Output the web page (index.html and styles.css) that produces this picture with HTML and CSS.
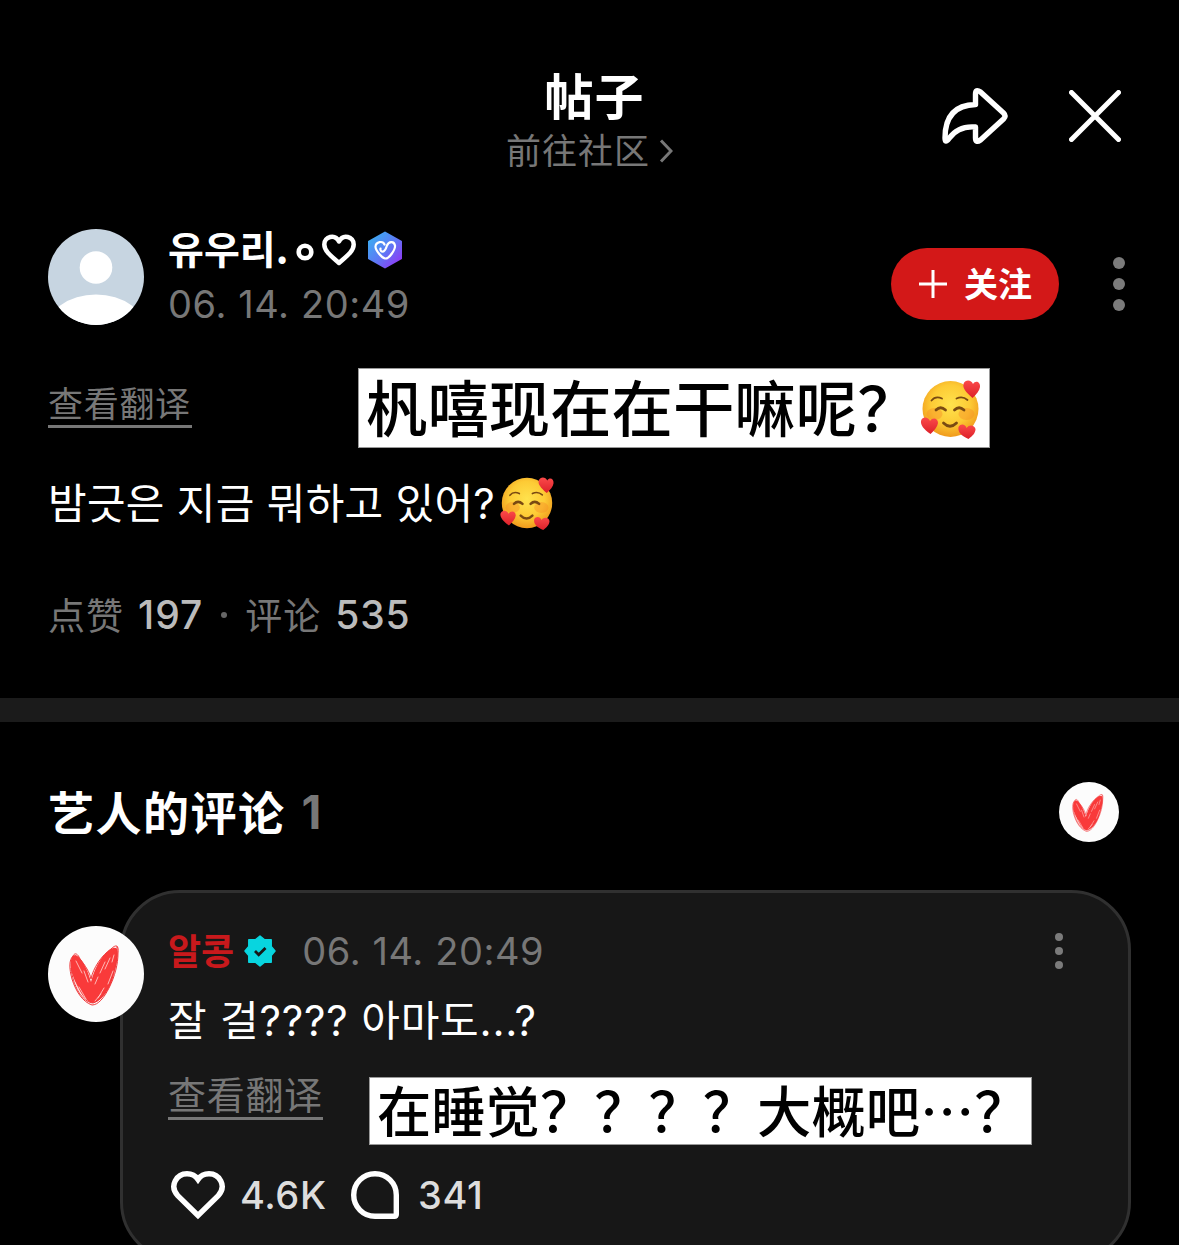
FILE: index.html
```html
<!DOCTYPE html>
<html lang="zh-CN">
<head>
<meta charset="utf-8">
<title>帖子</title>
<link rel="stylesheet" href="styles.css">
</head>
<body>
<svg width="0" height="0" class="defs" aria-hidden="true">
  <defs>
    <radialGradient id="face" cx="50%" cy="42%" r="58%">
      <stop offset="0" stop-color="#ffe24d"/><stop offset=".6" stop-color="#fdcb35"/><stop offset="1" stop-color="#f09a1c"/>
    </radialGradient>
    <linearGradient id="love" x1="0" y1="0" x2="0" y2="1">
      <stop offset="0" stop-color="#fb4a4a"/><stop offset="1" stop-color="#dc2029"/>
    </linearGradient>
    <linearGradient id="hex" x1="0" y1="0" x2="1" y2="1">
      <stop offset="0" stop-color="#35b5f0"/><stop offset=".5" stop-color="#5b7cf5"/><stop offset="1" stop-color="#9a2cf5"/>
    </linearGradient>
    <symbol id="emoji" viewBox="0 0 60 60">
      <circle cx="30" cy="30" r="28" fill="url(#face)"/>
      <ellipse cx="14" cy="35" rx="8" ry="6" fill="#f58a25" opacity=".4"/>
      <ellipse cx="46" cy="35" rx="8" ry="6" fill="#f58a25" opacity=".4"/>
      <g fill="none" stroke="#7a4a12" stroke-linecap="round">
        <path d="M11 21.500Q15 16.500 21.500 19.500M36 19.500Q42 16.500 47 21" stroke-width="1.800"/>
        <path d="M15.500 31Q20 26.500 25 31M34 31Q38.500 26.500 43.500 31" stroke-width="2.800"/>
        <path d="M23 44Q29.500 50.500 36 44" stroke-width="2.800"/>
      </g>
      <g fill="url(#love)">
        <path d="M52 19C45 13 42 9 43 5C45 0 51 1 52.500 5C55 1 60 3 59.500 8C59 12 56 15 52 19Z"/>
        <path d="M10 55C3 50 0 46 .5 42C2 37 8 38 9.500 42C12 38 17.500 39 17.500 44C17 48 14 51 10 55Z"/>
        <path d="M48 60C41 57 37 53 38 48C40 44 45 45 46 49C49 45 54 46 55 50C55 54 52 57 48 60Z"/>
      </g>
    </symbol>
    <symbol id="scribble" viewBox="0 0 96 96">
      <circle cx="48" cy="48" r="48" fill="#fcfcfc"/>
      <path d="M27 29C22 30 21 40 25 50C29 61 35 74 44 77C54 76 63 62 66 48C69 38 71 28 69 23C66 19 58 26 53 33C48 40 45 48 43 56C40 44 33 30 27 29Z" fill="#f93a3a"/>
      <g fill="none" stroke="#f0393b" stroke-width="1">
        <path d="M25 30C27 26 30 28 32 33C37 39 42 47 43 53C45 42 54 29 63 23C68 18 71 19 70 27C70 38 67 50 61 62C56 72 50 79 44 79C35 76 28 66 24 53C21 42 21 34 25 30Z"/>
        <path d="M23 42C25 60 34 76 45 77C58 74 70 44 69 20"/>
      </g>
      <g fill="none" stroke="#ffd6d3" stroke-width=".8" stroke-linecap="round">
        <path d="M27 56L33 68M31 61L38 73M28 35L34 47M57 36L52 47M62 32L57 43M65 45L60 58M56 62L50 72M36 45L40 56M50 51L47 58M53 68L47 75M66 29L64 36"/>
      </g>
    </symbol>
  </defs>
</svg>

<header class="topbar">
  <div class="topbar-center">
    <h1 class="topbar-title">帖子</h1>
    <a class="community"><span>前往社区</span><svg class="chevron" width="14" height="24" viewBox="0 0 14 24"><path d="M2 1.500L12 12L2 22.500" fill="none" stroke="#777" stroke-width="3"/></svg></a>
  </div>
  <div class="topbar-actions">
    <svg width="66" height="58" viewBox="0 0 66 58"><path d="M33.500 17.500V7Q33.500 1.500 38.500 5L61.500 26Q64.500 29 61.500 32L38.500 53Q33.500 56.500 33.500 51V40C22 39 13 43 7 51.500Q3 57 3 51C3 29 13 18 33.500 17.500Z" fill="none" stroke="#fff" stroke-width="5.400" stroke-linejoin="round"/></svg>
    <svg width="52" height="52" viewBox="0 0 52 52"><path d="M2.500 2.500L49.500 49.500M49.500 2.500L2.500 49.500" stroke="#fff" stroke-width="5" stroke-linecap="round"/></svg>
  </div>
</header>

<article class="post">
  <div class="author">
    <svg class="avatar" viewBox="0 0 96 96"><clipPath id="round"><circle cx="48" cy="48" r="48"/></clipPath><g clip-path="url(#round)"><rect width="96" height="96" fill="#c7d5e1"/><circle cx="48" cy="38.500" r="16.300" fill="#fff"/><ellipse cx="48" cy="102" rx="50" ry="36.500" fill="#fff"/></g></svg>
    <div class="author-info">
      <div class="author-name"><span>유우리.</span>
        <svg class="ring" width="18" height="18" viewBox="0 0 18 18"><circle cx="9" cy="9" r="6.300" fill="none" stroke="#fff" stroke-width="4.600"/></svg>
        <svg class="name-heart" width="34" height="32" viewBox="0 0 34 32"><path d="M17 29C9 22 2.300 17 2.300 10.500C2.300 2.500 13 -.5 17 7.500C21 -.5 31.700 2.500 31.700 10.500C31.700 17 25 22 17 29Z" fill="none" stroke="#fff" stroke-width="4.500" stroke-linejoin="round"/></svg>
        <svg class="hex" width="36" height="38" viewBox="0 0 36 38"><path d="M18 1.500L34 10.500V27.500L18 36.500L2 27.500V10.500Z" fill="url(#hex)" stroke="url(#hex)" stroke-width="2" stroke-linejoin="round"/><path d="M17.500 13.500C16 9.500 9 10.500 8.500 15.500C8.300 19 14.500 26.500 18 27.500C22.500 28 28.500 18 28 14.500C27 9.500 21.500 10.500 20 14.500C19 17.500 18.500 19.500 16.500 20.500C14.500 21 13 19.500 13.500 17.500" fill="none" stroke="#fff" stroke-width="2.200" stroke-linecap="round"/></svg>
      </div>
      <time class="date">06. 14. 20:49</time>
    </div>
    <button class="follow"><svg width="28" height="28" viewBox="0 0 28 28"><path d="M14 0V28M0 14H28" stroke="#fff" stroke-width="3"/></svg><span>关注</span></button>
    <svg class="kebab" width="12" height="54" viewBox="0 0 12 54" fill="#7b7b7b"><circle cx="6" cy="6" r="6"/><circle cx="6" cy="27" r="6"/><circle cx="6" cy="48" r="6"/></svg>
  </div>

  <div class="translate-row">
    <a class="translate">查看翻译</a>
    <div class="caption"><span>杋嘻现在在干嘛呢？</span><svg width="61" height="60"><use href="#emoji"/></svg></div>
  </div>
  <p class="body"><span>밤긋은 지금 뭐하고 있어?</span><svg width="56" height="54"><use href="#emoji"/></svg></p>
  <div class="stats"><span class="label">点赞</span><b class="likes">197</b><i class="dot"></i><span class="label">评论</span><b>535</b></div>
</article>

<section class="artist">
  <div class="artist-head">
    <h2>艺人的评论</h2><span class="count">1</span>
    <svg class="artist-badge" width="60" height="60"><use href="#scribble"/></svg>
  </div>
  <div class="comment">
    <svg class="avatar" viewBox="0 0 96 96"><use href="#scribble"/></svg>
    <div class="card">
      <div class="card-head">
        <span class="artist-name">알콩</span>
        <svg class="verified" width="32" height="32" viewBox="0 0 32 32"><path d="M16 1L20.600 4.800H27.200V11.400L31 16L27.200 20.600V27.200H20.600L16 31L11.400 27.200H4.800V20.600L1 16L4.800 11.400V4.800H11.400Z" fill="#08d5df" stroke="#08d5df" stroke-width="1.500" stroke-linejoin="round"/><path d="M11 16L14.700 19.700L21.500 13" fill="none" stroke="#171717" stroke-width="2.800"/></svg>
        <time class="date">06. 14. 20:49</time>
        <svg class="kebab-small" width="8" height="36" viewBox="0 0 8 36" fill="#7b7b7b"><circle cx="4" cy="4" r="4"/><circle cx="4" cy="18" r="4"/><circle cx="4" cy="32" r="4"/></svg>
      </div>
      <p class="reply">잘 걸???? 아마도...?</p>
      <div class="card-translate">
        <a class="translate large">查看翻译</a>
        <div class="caption small"><span>在睡觉？？？？大概吧…？</span></div>
      </div>
      <div class="reactions">
        <svg width="54" height="49" viewBox="0 0 54 49"><path d="M27 44.500L7 25C-2.500 14.500 6 2.800 16 2.800C21 2.800 25 5.500 27 8.500C29 5.500 33 2.800 38 2.800C48 2.800 56.500 14.500 47 25Z" fill="none" stroke="#fff" stroke-width="5.400"/></svg>
        <span class="n-likes">4.6K</span>
        <svg width="48" height="48" viewBox="0 0 48 48"><path d="M24 2.700A21.300 21.300 0 0 0 24 45.300H43.300Q45.300 45.300 45.300 43.300V24A21.300 21.300 0 0 0 24 2.700Z" fill="none" stroke="#fff" stroke-width="5.400"/></svg>
        <span class="n-replies">341</span>
      </div>
    </div>
  </div>
</section>
</body>
</html>
```
FILE: styles.css
```css
* { box-sizing: border-box; }
body {
  margin: 0;
  width: 1179px;
  height: 1245px;
  overflow: hidden;
  background: #000;
  color: #fff;
  font-family: Inter, "Noto Sans CJK SC", "Noto Sans CJK KR", sans-serif;
}
h1, h2, p { margin: 0; }
svg { display: block; flex: none; }
.defs { position: absolute; }

.topbar {
  display: grid;
  grid-template-columns: 1fr 300px 1fr;
  height: 229px;
  padding: 66px 58px 0 0;
}
.topbar-center {
  grid-column: 2;
  margin-left: 29px;
  margin-right: -29px;
  display: flex;
  flex-direction: column;
  align-items: center;
}
.topbar-title {
  font: 700 49px/54px "Noto Sans CJK SC", sans-serif;
  letter-spacing: 1px;
  margin: 0 0 0 10px;
  padding-top: 1px;
}
.community {
  display: flex;
  align-items: center;
  height: 54px;
  margin-top: 1px;
  font: 400 35px/54px "Noto Sans CJK SC", sans-serif;
  letter-spacing: 1px;
  color: #777;
}
.chevron { margin: 4px 0 0 9px; }
.topbar-actions {
  display: flex;
  justify-content: flex-end;
  align-items: center;
  height: 58px;
  margin-top: 21px;
  gap: 61px;
}

.post { height: 469px; padding: 0 54px 0 48px; }
.author { display: flex; height: 96px; }
.avatar { width: 96px; height: 96px; }
.author-info { margin-left: 24px; flex: 1; }
.author-name {
  display: flex;
  align-items: center;
  height: 42px;
  font: 700 39px/42px "Noto Sans CJK KR", sans-serif;
}
.author-name span { margin-top: -7px; }
.ring { margin: 4px 0 0 8px; }
.name-heart { margin: 0 0 0 8px; }
.hex { margin-left: 11px; }
.date {
  display: block;
  color: #777;
  font: 400 38px/46px Inter, sans-serif;
  letter-spacing: .58px;
}
.author .date { margin-top: 10px; }
.follow {
  display: flex;
  align-items: center;
  width: 168px;
  height: 72px;
  margin-top: 19px;
  padding: 0 0 0 28px;
  border: 0;
  border-radius: 36px;
  background: #d31818;
  color: #fff;
  font: 700 34px/40px "Noto Sans CJK SC", sans-serif;
}
.follow span { margin: -3px 0 0 17px; }
.kebab { margin: 28px 0 0 54px; }

.translate-row { display: flex; margin-top: 43px; height: 80px; }
.translate {
  width: 144px;
  height: 46px;
  margin-top: 14px;
  border-bottom: 3px solid #777;
  color: #777;
  font: 400 35px/39px "Noto Sans CJK SC", sans-serif;
  letter-spacing: .7px;
  white-space: nowrap;
}
.caption {
  display: flex;
  align-items: center;
  width: 632px;
  height: 80px;
  margin-left: 166px;
  padding-left: 7px;
  background: #fff;
  border: 1px solid #999;
  color: #000;
  white-space: nowrap;
  font: 500 61.400px/78px "Noto Sans CJK SC", sans-serif;
}
.caption span { margin-top: -5px; }
.caption svg { margin: 2px 0 0 1px; }
.body {
  display: flex;
  align-items: center;
  height: 60px;
  margin-top: 25px;
  font: 400 42px/60px Inter, "Noto Sans CJK KR", sans-serif;
  letter-spacing: .27px;
}
.body span { margin-top: 2px; }
.body svg { margin-left: 4px; }
.stats {
  display: flex;
  align-items: center;
  height: 50px;
  margin-top: 57px;
  color: #777;
  font: 400 37px/50px "Noto Sans CJK SC", sans-serif;
}
.stats .label { letter-spacing: 1px; margin-top: -3px; }
.stats b { margin-left: 14px; font: 500 39px/50px Inter, sans-serif; color: #bbb; letter-spacing: .8px; }
.stats .likes { letter-spacing: 1px; }
.dot { width: 6px; height: 6px; border-radius: 50%; background: #666; margin: 0 18px; }

.artist { border-top: 24px solid #1b1b1b; }
.artist-head {
  display: flex;
  align-items: center;
  height: 60px;
  margin: 60px 60px 48px 48px;
}
h2 { font: 700 46px/60px "Noto Sans CJK SC", sans-serif; letter-spacing: 1.500px; margin-top: -4px; }
.count { font: 700 46px/60px Inter, sans-serif; color: #777; margin-left: 16px; }
.artist-badge { margin-left: auto; }
.comment { display: flex; padding-left: 48px; }
.comment .avatar { margin-top: 36px; z-index: 1; }
.card {
  width: 1011px;
  height: 372px;
  margin-left: -24px;
  padding: 35px 0 0 45px;
  border: 3px solid #303030;
  border-radius: 60px;
  background: #171717;
}
.card-head { display: flex; align-items: center; height: 46px; }
.artist-name { color: #c8191c; font: 700 36px/46px "Noto Sans CJK KR", sans-serif; margin-top: -4px; }
.verified { margin-left: 10px; }
.card .date { margin-left: 26px; }
.kebab-small { margin-left: auto; margin-right: 65px; }
.reply {
  height: 60px;
  margin-top: 16px;
  font: 400 42px/62px Inter, "Noto Sans CJK KR", sans-serif;
  letter-spacing: .8px;
}
.card-translate { display: flex; margin-top: 27px; height: 69px; }
.large { width: 155px; height: 47px; margin-top: -4px; font-size: 38px; }
.small { width: 663px; height: 68px; margin-left: 46px; font-size: 54.300px; }
.reactions {
  display: flex;
  align-items: center;
  height: 50px;
  margin: 24px 0 0 3px;
  font: 500 38px/50px Inter, sans-serif;
  color: #ddd;
  letter-spacing: .6px;
}
.n-likes { width: 109px; padding-left: 15px; margin-right: 17px; white-space: nowrap; }
.n-replies { margin-left: 19px; }
```
